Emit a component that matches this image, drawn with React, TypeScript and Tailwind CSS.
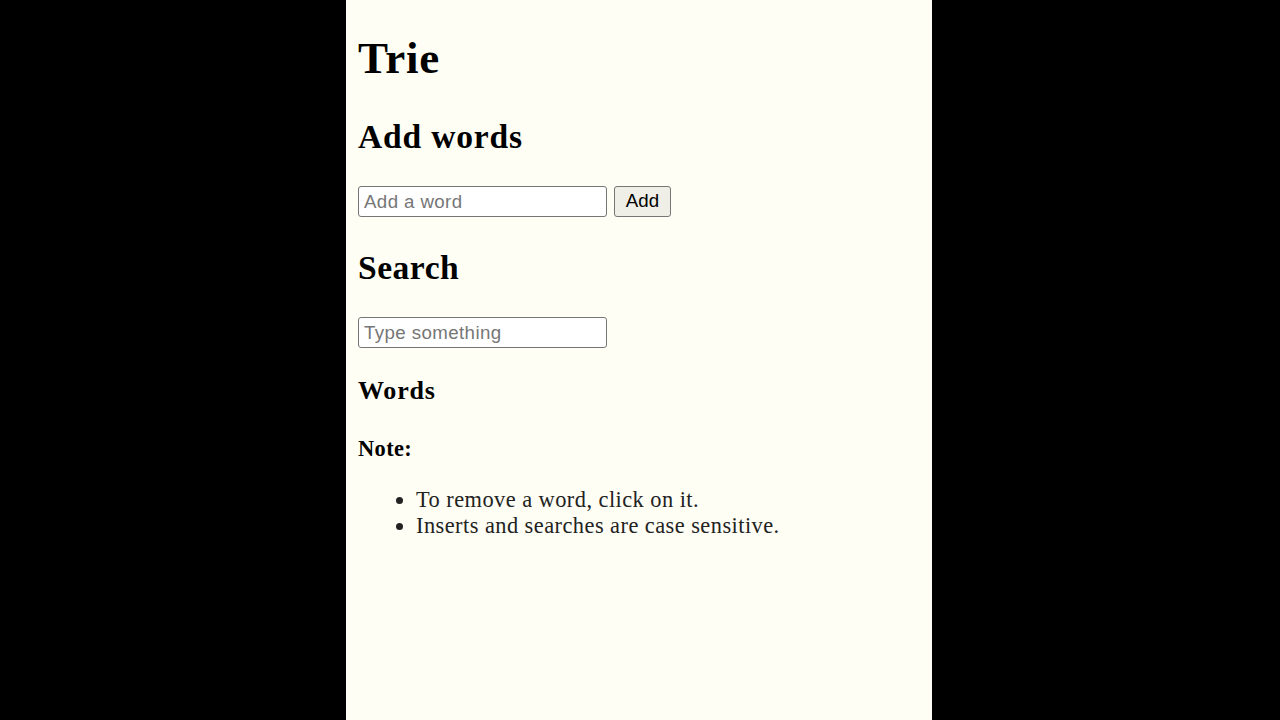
import React from "react";

export default function App() {
  return (
    <div className="flex h-[720px] w-full justify-center bg-black pr-[2px]">
      <div className="flex w-[586px] flex-col bg-[#fefef4] px-[12px] pt-[32px] font-['Liberation_Serif',serif] text-black">
        <h1 className="text-[45px] font-bold leading-[52px] tracking-[0.7px]">Trie</h1>
        <h2 className="mt-[33px] text-[33.6px] font-bold leading-[39px] tracking-[0.8px]">Add words</h2>
        <div className="mt-[30px] flex items-center">
          <input
            type="text"
            placeholder="Add a word"
            className="h-[31px] w-[249px] rounded-[3px] border-[1.5px] border-[#767676] bg-white px-[5px] font-['Liberation_Sans',Arial,sans-serif] text-[18.7px] tracking-[0.4px] text-black placeholder:text-[#767676] outline-none"
          />
          <button className="ml-[7px] h-[31px] w-[57px] rounded-[3px] border-[1.5px] border-[#767676] bg-[#efefe8] font-['Liberation_Sans',Arial,sans-serif] text-[18.7px] text-black">
            Add
          </button>
        </div>
        <h2 className="mt-[30.5px] text-[33.6px] font-bold leading-[39px] tracking-[0.5px]">Search</h2>
        <div className="mt-[30.5px] flex">
          <input
            type="text"
            placeholder="Type something"
            className="h-[31px] w-[249px] rounded-[3px] border-[1.5px] border-[#767676] bg-white px-[5px] font-['Liberation_Sans',Arial,sans-serif] text-[18.7px] tracking-[0.4px] text-black placeholder:text-[#767676] outline-none"
          />
        </div>
        <h3 className="mt-[27.5px] text-[26px] font-bold leading-[30px] tracking-[0.8px]">Words</h3>
        <h4 className="mt-[30px] text-[22.4px] font-bold leading-[26px] tracking-[0.4px]">Note:</h4>
        <ul className="mt-[25px] list-disc pl-[58px] text-[22.4px] leading-[26px] tracking-[0.45px] text-[#222]">
          <li>To remove a word, click on it.</li>
          <li>Inserts and searches are case sensitive.</li>
        </ul>
      </div>
    </div>
  );
}
